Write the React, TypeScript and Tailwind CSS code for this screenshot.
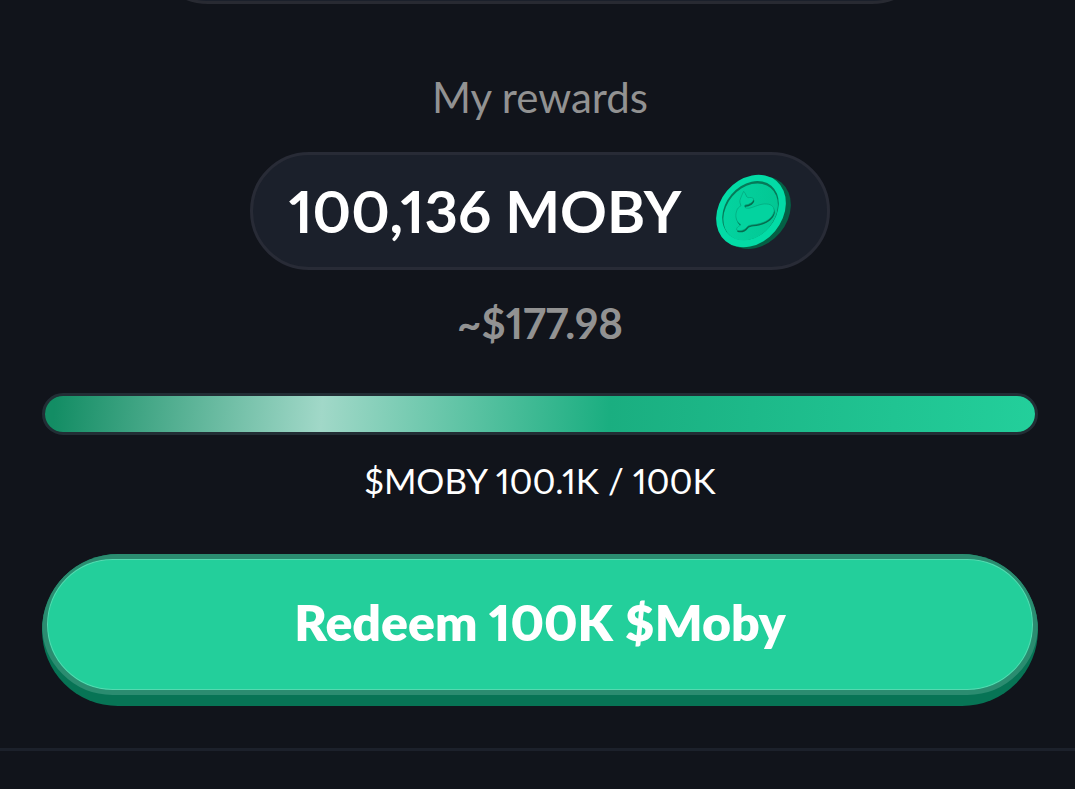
const CoinIcon = () => {
    return (
        <svg viewBox="0 0 330 300" className="h-[100px] w-[110px] shrink-0" aria-hidden="true">
            <defs>
                <linearGradient id="coin-face" x1="0" y1="0" x2="1" y2="1">
                    <stop offset="0" stopColor="#04d6a2"/>
                    <stop offset="1" stopColor="#02c491"/>
                </linearGradient>
            </defs>
            <g transform="translate(15 4) rotate(-50 150 151)">
                <ellipse cx="150" cy="151" rx="118" ry="94" fill="#056045"/>
            </g>
            <g transform="translate(7 2) rotate(-50 150 151)">
                <ellipse cx="150" cy="151" rx="118" ry="94" fill="#056045"/>
            </g>
            <g transform="translate(0 -1) rotate(-50 150 151)">
                <ellipse cx="150" cy="151" rx="118" ry="94" fill="#03dba6"/>
                <ellipse cx="150" cy="149" rx="97" ry="75" fill="#057a59"/>
                <ellipse cx="147" cy="152" rx="94" ry="72" fill="url(#coin-face)"/>
            </g>
            <path
                d="M128 91C135 97 134 107 141 110C148 109 156 109 158 114C156 124 145 131 132 132C129 138 132 142 143 142C163 138 177 127 198 129C213 130 221 140 219 152C214 174 187 189 156 191C148 192 142 193 138 198C132 207 117 212 107 207C105 200 113 196 120 191C106 184 101 166 107 150C109 142 114 138 120 134C117 127 115 121 118 114C120 106 125 99 128 91Z"
                fill="#056c4e"
                transform="translate(2 5)"
            />
            <path
                d="M128 91C135 97 134 107 141 110C148 109 156 109 158 114C156 124 145 131 132 132C129 138 132 142 143 142C163 138 177 127 198 129C213 130 221 140 219 152C214 174 187 189 156 191C148 192 142 193 138 198C132 207 117 212 107 207C105 200 113 196 120 191C106 184 101 166 107 150C109 142 114 138 120 134C117 127 115 121 118 114C120 106 125 99 128 91Z"
                fill="#03d39f"
                stroke="#04a37a"
                strokeWidth="2"
            />
        </svg>
    );
};

const Rewards = () => {
    return (
        <section className="flex flex-col items-center pt-[70px] pr-[37px] pb-[42px] pl-[42px]">
            <h2 className="text-[42px] leading-[46px] text-[#929292]">My rewards</h2>

            <div
                className="mt-8 flex h-[118px] items-center gap-5 rounded-full border-[3px] border-[#282b36]
                           bg-[#1b202b] pr-4 pl-9"
            >
                <p className="text-[58px] leading-[64px] font-bold whitespace-nowrap text-white">100,136 MOBY</p>
                <CoinIcon/>
            </div>

            <p className="mt-[30px] text-[42px] leading-[46px] font-bold text-[#929292]">~$177.98</p>

            <div
                role="progressbar"
                aria-label="$MOBY"
                aria-valuemin={0}
                aria-valuemax={100}
                aria-valuenow={100}
                className="mt-[47px] h-[42px] w-full rounded-full border-[3px] border-[#222e35]"
            >
                <div
                    className="h-full rounded-full
                               bg-[linear-gradient(94deg,#138d64_1%,#a1d8c8_28%,#1aae80_57%,#23cf9b_100%)]"
                />
            </div>

            <p className="mt-[26px] text-[35px] leading-[38px] text-white">$MOBY 100.1K / 100K</p>

            <button
                type="button"
                className="mt-[55px] w-full cursor-pointer overflow-hidden rounded-full bg-[#077455] pb-[11px]"
            >
                <span
                    className="flex h-[141px] items-center justify-center rounded-full border-[5px] border-[#2b8c70]
                               bg-[#23cf9b] pb-1 text-[50px] font-extrabold text-white
                               shadow-[inset_0_0_0_1px_#55d9b0]"
                >
                    Redeem 100K $Moby
                </span>
            </button>
        </section>
    );
};

const App = () => {
    return (
        <main className="min-h-screen bg-[#11141b] font-['Lato','Open_Sans',sans-serif] proportional-nums">
            <div className="flex h-1 items-end justify-center overflow-hidden pl-[5px]">
                <div className="h-[118px] w-[73%] shrink-0 rounded-full border-[3px] border-[#282a32] bg-[#1b202b]"/>
            </div>
            <Rewards/>
            <hr className="border-t-[3px] border-[#1c212b]"/>
        </main>
    );
};

export default App;
